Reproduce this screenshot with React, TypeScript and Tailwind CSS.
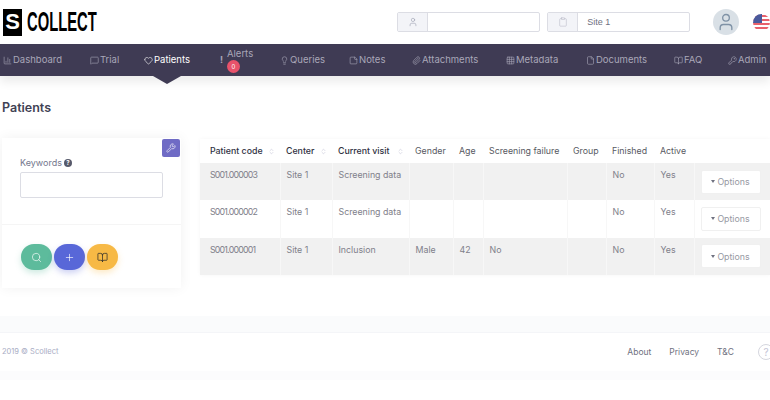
import React from 'react';
import {
  BarChart3, BookOpen, ChevronDown, ChevronsUpDown, Clipboard, File, Grid3x3, Heart, KeyRound, Lightbulb, MessageSquare,
  Paperclip, Plus, Search, StickyNote, User, Wrench,
} from 'lucide-react';

const nav = [
  { label: 'Dashboard', icon: BarChart3, width: 'w-[87px]' },
  { label: 'Trial', icon: MessageSquare, width: 'w-[54px]' },
  { label: 'Patients', icon: Heart, width: 'w-[76px]', active: true },
  { label: 'Queries', icon: Lightbulb, width: 'w-[69px]' },
  { label: 'Notes', icon: StickyNote, width: 'w-[63px]' },
  { label: 'Attachments', icon: Paperclip, width: 'w-[94px]' },
  { label: 'Metadata', icon: Grid3x3, width: 'w-[80px]' },
  { label: 'Documents', icon: File, width: 'w-[88px]' },
  { label: 'FAQ', icon: BookOpen, width: 'w-[54px]' },
  { label: 'Admin', icon: KeyRound, width: 'w-[60px]' },
];

const columns = [
  { label: 'Patient code', width: 'w-[80px]', pad: 'pl-[10px]', sort: true, bold: true },
  { label: 'Center', width: 'w-[52px]', pad: 'pl-[6px]', sort: true, bold: true },
  { label: 'Current visit', width: 'w-[77px]', pad: 'pl-[6px]', sort: true, bold: true },
  { label: 'Gender', width: 'w-[44px]', pad: 'pl-[6px]' },
  { label: 'Age', width: 'w-[30px]', pad: 'pl-[6px]' },
  { label: 'Screening failure', width: 'w-[84px]', pad: 'pl-[6px]' },
  { label: 'Group', width: 'w-[39px]', pad: 'pl-[6px]' },
  { label: 'Finished', width: 'w-[48px]', pad: 'pl-[6px]' },
  { label: 'Active', width: 'w-[40px]', pad: 'pl-[6px]' },
  { label: '', width: 'w-[76px]', pad: '' },
];

const rows = [
  { code: 'S001.000003', visit: 'Screening data', gender: '', age: '', failure: '', shaded: true },
  { code: 'S001.000002', visit: 'Screening data', gender: '', age: '', failure: '', shaded: false },
  { code: 'S001.000001', visit: 'Inclusion', gender: 'Male', age: '42', failure: 'No', shaded: true },
];

function NavItem({ item }: { item: (typeof nav)[number] }) {
  const Icon = item.icon;
  return (
    <div className={`${item.width} shrink-0 relative flex items-center gap-[1px] ${item.active ? 'text-white' : 'text-[#a9a7b8]'}`}>
      <Icon size={9} strokeWidth={1.6} className="shrink-0" />
      <span className="whitespace-nowrap">{item.label}</span>
      {item.active && (
        <span className="absolute left-[9px] top-[23px] w-0 h-0 border-l-[14px] border-r-[14px] border-t-[8px] border-l-transparent border-r-transparent border-t-[#3f3b54]" />
      )}
    </div>
  );
}

function Cell({ children, shaded, first }: { children?: React.ReactNode; shaded: boolean; first?: boolean }) {
  return (
    <td className={`align-top pt-[5px] border-r border-[#f7f7f7] text-[8.8px] text-[#80808a] whitespace-nowrap ${first ? 'pl-[10px] tracking-[-0.8px]' : 'pl-[6px]'} ${shaded ? 'bg-[#f1f1f1]' : 'bg-white'}`}>
      {children}
    </td>
  );
}

export default function App() {
  return (
    <div className="w-[770px] h-[400px] overflow-hidden bg-white font-['Inter','Open_Sans',sans-serif]">
      <header className="h-[44px] flex items-center">
        <div className="w-[398px] pl-[3px] flex items-center">
          <span className="w-[19px] h-[27px] bg-black text-white flex items-center justify-center text-[22px] font-bold leading-none font-['Liberation_Sans',sans-serif]">S</span>
          <span className="ml-[5px] w-[69px] text-[28px] leading-none font-bold text-black font-['Liberation_Sans',sans-serif] origin-left scale-x-[0.527] whitespace-nowrap">COLLECT</span>
        </div>
        <div className="w-[143px] h-[20px] flex border border-[#dcdde4] rounded-[2px]">
          <span className="w-[30px] bg-[#f3f4f8] border-r border-[#dcdde4] flex items-center justify-center text-[#9a9cae]">
            <User size={10} strokeWidth={1.4} />
          </span>
          <span className="flex-1" />
        </div>
        <div className="ml-[7px] w-[143px] h-[20px] flex border border-[#dcdde4] rounded-[2px]">
          <span className="w-[30px] bg-[#f3f4f8] border-r border-[#dcdde4] flex items-center justify-center text-[#b0b2c0]">
            <Clipboard size={10} strokeWidth={1.2} />
          </span>
          <span className="pl-[9px] text-[9px] leading-[18px] text-[#6f7180] font-['Liberation_Sans',sans-serif]">Site 1</span>
        </div>
        <div className="ml-[23px] w-[26px] h-[26px] rounded-full bg-[#d9e0e6] flex items-center justify-center text-[#7f92a6]">
          <User size={20} strokeWidth={1.6} />
        </div>
        <svg className="ml-[14px] shrink-0" width="17" height="17" viewBox="0 0 17 17">
          <defs>
            <clipPath id="flag"><circle cx="8.5" cy="8.5" r="8.5" /></clipPath>
          </defs>
          <g clipPath="url(#flag)">
            <rect width="17" height="17" fill="#fff" />
            <rect y="1" width="17" height="2" fill="#e8616b" />
            <rect y="5" width="17" height="2" fill="#e8616b" />
            <rect y="9" width="17" height="2" fill="#e8616b" />
            <rect y="13" width="17" height="2" fill="#e8616b" />
            <rect width="9" height="9" fill="#4a5a9c" />
          </g>
        </svg>
      </header>

      <nav className="h-[32px] bg-[#3f3b54] pl-[3px] flex items-center text-[9.5px] shadow-[0_6px_10px_rgba(0,0,0,0.08)] relative">
        {nav.slice(0, 3).map((item) => <NavItem key={item.label} item={item} />)}
        <div className="w-[60px] shrink-0 flex items-center text-[#a9a7b8]">
          <span className="w-[7px] text-[9px] font-bold">!</span>
          <div className="flex flex-col items-start">
            <span className="leading-[12px]">Alerts</span>
            <span className="w-[13px] h-[13px] rounded-full bg-[#e8526b] text-white text-[6px] flex items-center justify-center">0</span>
          </div>
        </div>
        {nav.slice(3).map((item) => <NavItem key={item.label} item={item} />)}
        <ChevronDown size={6} className="text-[#a9a7b8] shrink-0" />
      </nav>

      <h1 className="mt-[23px] pl-[2px] text-[12.5px] leading-[17px] font-semibold text-[#3f4254]">Patients</h1>

      <div className="mt-[22px] flex items-start">
        <aside className="ml-[2px] w-[179px] h-[150px] bg-white shadow-[0_0_12px_rgba(0,0,0,0.06)] relative">
          <button className="absolute right-[1px] top-[1px] w-[18px] h-[18px] rounded-[2px] bg-[#6f6bc5] text-white flex items-center justify-center">
            <Wrench size={10} strokeWidth={1.5} />
          </button>
          <div className="h-[87px] pt-[19px] pl-[18px] border-b border-[#f5f5f5]">
            <div className="flex items-center gap-[2px] text-[9px] leading-[12px] text-[#74788d]">
              Keywords
              <span className="w-[8px] h-[8px] rounded-full bg-[#575a6b] text-white text-[6px] font-bold flex items-center justify-center">?</span>
            </div>
            <div className="mt-[3px] w-[143px] h-[26px] bg-white border border-[#dcdde4] rounded-[2px]" />
          </div>
          <div className="pt-[19px] pl-[19px] flex gap-[2px]">
            <button className="w-[31px] h-[26px] rounded-full bg-[#5dbb9c] text-white flex items-center justify-center shadow-[0_3px_6px_rgba(93,187,156,0.3)]">
              <Search size={11} strokeWidth={1.4} />
            </button>
            <button className="w-[31px] h-[26px] rounded-full bg-[#5867d8] text-white flex items-center justify-center shadow-[0_3px_6px_rgba(88,103,216,0.3)]">
              <Plus size={11} strokeWidth={1.4} />
            </button>
            <button className="w-[31px] h-[26px] rounded-full bg-[#f7b945] text-[#2b2b2b] flex items-center justify-center shadow-[0_3px_6px_rgba(247,185,69,0.3)]">
              <BookOpen size={11} strokeWidth={1.6} />
            </button>
          </div>
        </aside>

        <table className="mt-[1px] ml-[19px] w-[570px] table-fixed border-collapse shadow-[0_0_4px_rgba(0,0,0,0.04)]">
          <thead>
            <tr className="h-[24px]">
              {columns.map((c) => (
                <th key={c.label} className={`${c.width} ${c.pad} relative text-left text-[8.8px] whitespace-nowrap ${c.bold ? 'font-medium text-[#2f3142]' : 'font-normal text-[#575962]'}`}>
                  {c.label}
                  {c.sort && <ChevronsUpDown size={7} className="absolute right-[5px] top-[9px] text-[#c4c5d6]" />}
                </th>
              ))}
            </tr>
          </thead>
          <tbody>
            {rows.map((r) => (
              <tr key={r.code} className="h-[37.3px]">
                <Cell shaded={r.shaded} first>{r.code}</Cell>
                <Cell shaded={r.shaded}>Site 1</Cell>
                <Cell shaded={r.shaded}>{r.visit}</Cell>
                <Cell shaded={r.shaded}>{r.gender}</Cell>
                <Cell shaded={r.shaded}>{r.age}</Cell>
                <Cell shaded={r.shaded}>{r.failure}</Cell>
                <Cell shaded={r.shaded} />
                <Cell shaded={r.shaded}>No</Cell>
                <Cell shaded={r.shaded}>Yes</Cell>
                <td className={`pl-[6px] ${r.shaded ? 'bg-[#f1f1f1]' : 'bg-white'}`}>
                  <button className="w-[60px] h-[24px] bg-white border border-[#f0f0f0] rounded-[2px] flex items-center justify-center gap-[2px] text-[8.8px] text-[#9699a2]">
                    <span className="w-0 h-0 border-l-[2.5px] border-r-[2.5px] border-t-[3px] border-l-transparent border-r-transparent border-t-[#6f7180]" />
                    Options
                  </button>
                </td>
              </tr>
            ))}
          </tbody>
        </table>
      </div>

      <div className="mt-[28px] h-[16px] bg-[#fafbfc]" />
      <footer className="h-[39px] pl-[2px] flex items-center border-t border-[#f4f5f8]">
        <span className="text-[7.5px] text-[#a7abc3]">2019 © Scollect</span>
        <div className="ml-auto flex items-center text-[8.5px] text-[#6f7180]">
          <span>About</span>
          <span className="ml-[18px]">Privacy</span>
          <span className="ml-[18px]">T&amp;C</span>
          <span className="ml-[24px] mr-[-4px] w-[16px] h-[16px] rounded-full border border-[#d5d6de] text-[#c4c5d6] text-[10px] flex items-center justify-center">?</span>
        </div>
      </footer>
      <div className="h-[9px] bg-[#fcfcfd]" />
    </div>
  );
}
